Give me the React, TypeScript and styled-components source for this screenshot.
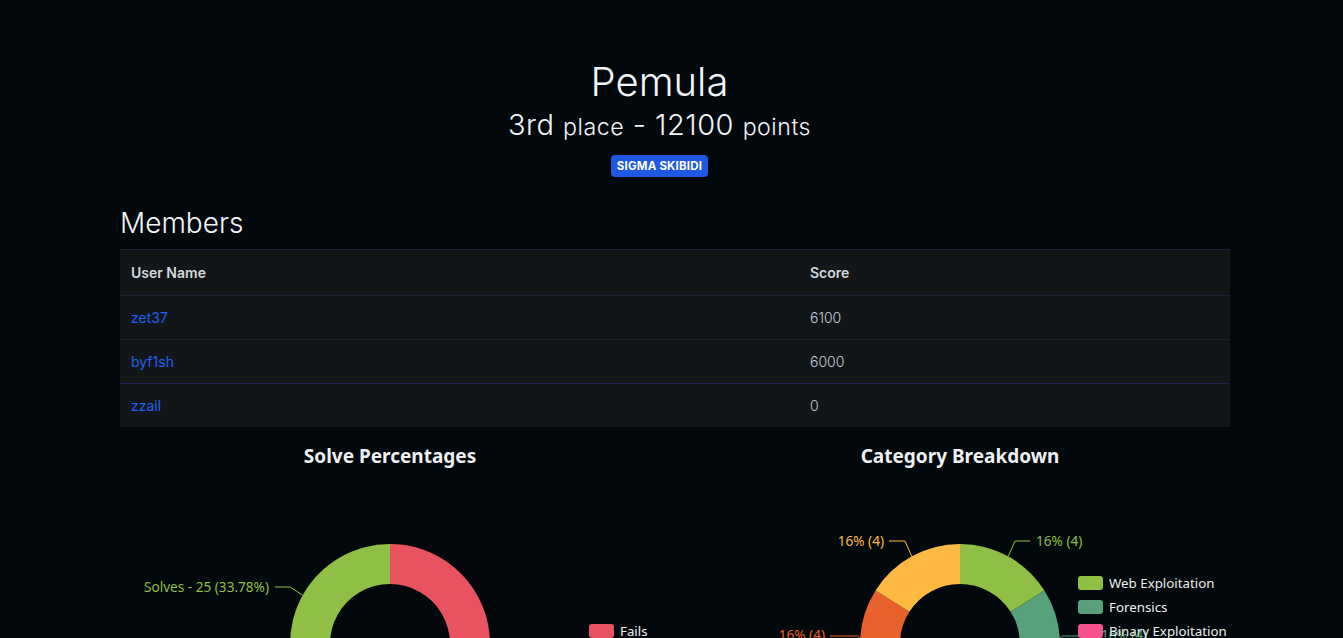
import React from "react";
import styled, { createGlobalStyle } from "styled-components";

const GlobalStyle = createGlobalStyle`
  html, body { margin: 0; padding: 0; background: #02080b; }
  body { font-family: Inter, "Noto Sans", sans-serif; color: #e9eef3; }
  * { box-sizing: border-box; }
`;

const Page = styled.div`
  padding-top: 58px;
  min-height: 638px;
  background: #02080b;
  overflow: hidden;
`;

const Header = styled.header`
  width: 1319px;
  display: flex;
  flex-direction: column;
  align-items: center;
`;

const TeamName = styled.h1`
  margin: 0;
  font-size: 40px;
  line-height: 48px;
  font-weight: 300;
  color: #f2f5f8;
`;

const Rank = styled.h3`
  margin: 2px 0 0 0;
  font-size: 29px;
  line-height: 34px;
  font-weight: 300;
  letter-spacing: 0.5px;
  color: #f2f5f8;
`;

const Small = styled.small`
  font-size: 80%;
`;

const Badge = styled.span`
  margin-top: 11px;
  display: inline-block;
  background: #1f58e2;
  color: #ffffff;
  font-size: 11.5px;
  font-weight: 700;
  line-height: 14px;
  padding: 4px 6px;
  border-radius: 4px;
  letter-spacing: 0.2px;
`;

const Container = styled.section`
  width: 1110px;
  margin-left: 120px;
  margin-top: 29px;
`;

const SectionTitle = styled.h3`
  margin: 0 0 9px 0;
  font-size: 28px;
  line-height: 34px;
  font-weight: 300;
  color: #f2f5f8;
`;

const Table = styled.table`
  width: 100%;
  border-collapse: collapse;
  background: #121619;
  font-size: 14px;
  line-height: 21px;
`;

const Th = styled.th<{ $w?: number }>`
  text-align: left;
  padding: 12px 11px;
  font-weight: 600;
  color: #d3d8dd;
  border-top: 1px solid #1d2134;
  ${(p) => (p.$w ? `width: ${p.$w}px;` : "")}
`;

const Tr = styled.tr<{ $accent?: boolean }>`
  & > td {
    border-top: 1px solid ${(p) => (p.$accent ? "#1f2150" : "#1d2134")};
  }
`;

const Td = styled.td`
  padding: 11px 11px;
  color: #c3ccd6;
  font-weight: 300;
`;

const UserLink = styled.a`
  color: #2160f2;
  text-decoration: none;
  font-weight: 400;
`;

const ChartRow = styled.section`
  width: 1140px;
  margin-left: 105px;
  margin-top: 13px;
  display: grid;
  grid-template-columns: 570px 570px;
`;

const ChartBox = styled.div`
  height: 400px;
  font-family: "Noto Sans", "DejaVu Sans", sans-serif;
`;

type Seg = { name: string; value: number; color: string };

function pt(cx: number, cy: number, r: number, deg: number) {
  const a = (deg * Math.PI) / 180;
  return [cx + r * Math.sin(a), cy - r * Math.cos(a)];
}

function arcPath(cx: number, cy: number, R: number, r: number, a0: number, a1: number) {
  const [x0, y0] = pt(cx, cy, R, a0);
  const [x1, y1] = pt(cx, cy, R, a1);
  const [x2, y2] = pt(cx, cy, r, a1);
  const [x3, y3] = pt(cx, cy, r, a0);
  const large = a1 - a0 > 180 ? 1 : 0;
  return `M${x0} ${y0} A${R} ${R} 0 ${large} 1 ${x1} ${y1} L${x2} ${y2} A${r} ${r} 0 ${large} 0 ${x3} ${y3} Z`;
}

type Label = { text: string; color: string; pts: string; tx: number; ty: number; anchor: "start" | "end" };

function Donut({
  title,
  segs,
  labels,
  legendX,
}: {
  title: string;
  segs: Seg[];
  labels: Label[];
  legendX: number;
}) {
  const total = segs.reduce((s, x) => s + x.value, 0);
  let acc = 0;
  const cx = 285;
  const cy = 204;
  const legendTop = cy - (segs.length * 24 - 10) / 2 - 1;
  return (
    <ChartBox>
      <svg width="570" height="400" viewBox="0 0 570 400">
        <text x="285" y="23" textAnchor="middle" fill="#eef0f2" fontSize="19" fontWeight="700">
          {title}
        </text>
        {segs.map((s) => {
          const a0 = (acc / total) * 360;
          acc += s.value;
          const a1 = (acc / total) * 360;
          return <path key={s.name} d={arcPath(cx, cy, 100, 60, a0, a1)} fill={s.color} />;
        })}
        {labels.map((l, i) => (
          <g key={i}>
            <polyline points={l.pts} fill="none" stroke={l.color} strokeWidth="1" />
            <text x={l.tx} y={l.ty} textAnchor={l.anchor} fill={l.color} fontSize="13.6">
              {l.text}
            </text>
          </g>
        ))}
        {segs.map((s, i) => (
          <g key={"lg" + s.name}>
            <rect x={legendX} y={legendTop + i * 24} width="25" height="14" rx="3" fill={s.color} />
            <text x={legendX + 31} y={legendTop + i * 24 + 11.5} fill="#eeeeee" fontSize="13.3">
              {s.name}
            </text>
          </g>
        ))}
      </svg>
    </ChartBox>
  );
}

const members = [
  { name: "zet37", score: 6100 },
  { name: "byf1sh", score: 6000 },
  { name: "zzail", score: 0 },
];

export default function App() {
  return (
    <>
      <GlobalStyle />
      <Page>
        <Header>
          <TeamName>Pemula</TeamName>
          <Rank>
            3rd <Small>place</Small> - 12100 <Small>points</Small>
          </Rank>
          <Badge>SIGMA SKIBIDI</Badge>
        </Header>
        <Container>
          <SectionTitle>Members</SectionTitle>
          <Table>
            <thead>
              <tr>
                <Th $w={679}>User Name</Th>
                <Th>Score</Th>
              </tr>
            </thead>
            <tbody>
              {members.map((m, i) => (
                <Tr key={m.name} $accent={i === 2}>
                  <Td>
                    <UserLink href="#">{m.name}</UserLink>
                  </Td>
                  <Td>{m.score}</Td>
                </Tr>
              ))}
            </tbody>
          </Table>
        </Container>
        <ChartRow>
          <Donut
            title="Solve Percentages"
            legendX={484}
            segs={[
              { name: "Fails", value: 49, color: "#e8535f" },
              { name: "Solves", value: 25, color: "#8fbf44" },
            ]}
            labels={[
              {
                text: "Solves - 25 (33.78%)",
                color: "#8fbf44",
                pts: "197.7,155.2 185,147 170,147",
                tx: 164,
                ty: 151.5,
                anchor: "end",
              },
            ]}
          />
          <Donut
            title="Category Breakdown"
            legendX={403}
            segs={[
              { name: "Web Exploitation", value: 4, color: "#8fbf44" },
              { name: "Forensics", value: 4, color: "#57a17b" },
              { name: "Binary Exploitation", value: 4, color: "#f5528f" },
              { name: "Cryptography", value: 5, color: "#8d5fc7" },
              { name: "Reverse Engineering", value: 4, color: "#e8612d" },
              { name: "Miscellaneous", value: 4, color: "#fdb942" },
            ]}
            labels={[
              { text: "16% (4)", color: "#fdb942", pts: "236.8,116.4 230,101 214,101", tx: 209, ty: 105.5, anchor: "end" },
              { text: "16% (4)", color: "#8fbf44", pts: "333.2,116.4 340,101 355,101", tx: 361, ty: 105.5, anchor: "start" },
              { text: "16% (4)", color: "#e8612d", pts: "185.2,197.7 183,196 155,196", tx: 150, ty: 200, anchor: "end" },
              { text: "16% (4)", color: "#57a17b", pts: "384.8,197.7 387,196 420,196", tx: 426, ty: 200, anchor: "start" },
            ]}
          />
        </ChartRow>
      </Page>
    </>
  );
}
